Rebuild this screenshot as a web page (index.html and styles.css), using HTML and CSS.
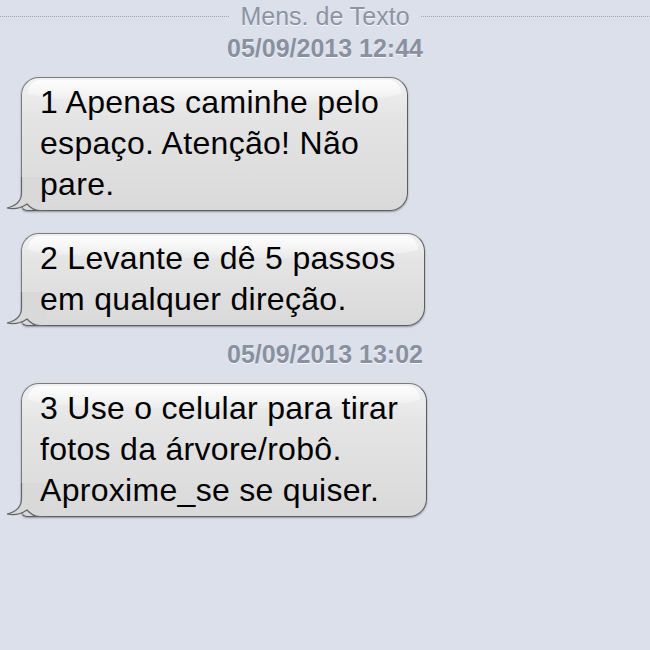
FILE: index.html
```html
<!DOCTYPE html>
<html lang="pt">
<head>
<meta charset="utf-8">
<title>Mens. de Texto</title>
<link rel="stylesheet" href="styles.css">
</head>
<body>
<div class="thread">
  <div class="header">
    <span class="dots"></span>
    <span class="label">Mens. de Texto</span>
    <span class="dots"></span>
  </div>
  <div class="stamp">05/09/2013 12:44</div>
  <div class="bubble">
    <svg class="tail" width="40" height="34" viewBox="0 0 40 34"><path class="tail-fill" d="M15,0 L15,16 C15,24 9,29 1,31 C8,32.5 16,30.5 21,27 C24,30.5 28,33.5 34,33.5 L40,33.5 L40,0 Z"/><path class="tail-line" d="M15.5,0 L15.5,16 C15.5,24 9,29 1,31 C8,32.5 16,30.5 21,27 C24,30.5 28,33.5 34,33.5 L40,33.5"/></svg>
    <span class="txt">1 Apenas caminhe pelo<br>espaço. Atenção! Não<br>pare.</span>
  </div>
  <div class="bubble second">
    <svg class="tail" width="40" height="34" viewBox="0 0 40 34"><path class="tail-fill" d="M15,0 L15,16 C15,24 9,29 1,31 C8,32.5 16,30.5 21,27 C24,30.5 28,33.5 34,33.5 L40,33.5 L40,0 Z"/><path class="tail-line" d="M15.5,0 L15.5,16 C15.5,24 9,29 1,31 C8,32.5 16,30.5 21,27 C24,30.5 28,33.5 34,33.5 L40,33.5"/></svg>
    <span class="txt">2 Levante e dê 5 passos<br>em qualquer direção.</span>
  </div>
  <div class="stamp later">05/09/2013 13:02</div>
  <div class="bubble">
    <svg class="tail" width="40" height="34" viewBox="0 0 40 34"><path class="tail-fill" d="M15,0 L15,16 C15,24 9,29 1,31 C8,32.5 16,30.5 21,27 C24,30.5 28,33.5 34,33.5 L40,33.5 L40,0 Z"/><path class="tail-line" d="M15.5,0 L15.5,16 C15.5,24 9,29 1,31 C8,32.5 16,30.5 21,27 C24,30.5 28,33.5 34,33.5 L40,33.5"/></svg>
    <span class="txt">3 Use o celular para tirar<br>fotos da árvore/robô.<br>Aproxime_se se quiser.</span>
  </div>
</div>
</body>
</html>
```
FILE: styles.css
```css
html, body {
  margin: 0;
  padding: 0;
}
body {
  width: 650px;
  height: 650px;
  overflow: hidden;
  background: #dbe0eb;
  font-family: "Liberation Sans", Helvetica, Arial, sans-serif;
}
.thread {
  display: flex;
  flex-direction: column;
  align-items: flex-start;
  padding-top: 2px;
}
.header {
  display: flex;
  align-items: center;
  align-self: stretch;
  height: 28px;
  font-size: 25px;
  line-height: 28px;
  color: #8c93a3;
  text-shadow: 0 1px 0 rgba(255,255,255,0.8);
}
.dots {
  flex: 1;
  height: 0;
  border-top: 1px dotted #9ea6b5;
}
.label {
  margin: 0 11px;
}
.stamp {
  align-self: stretch;
  text-align: center;
  font-size: 25px;
  font-weight: bold;
  line-height: 28px;
  color: #8990a0;
  text-shadow: 0 1px 0 rgba(255,255,255,0.8);
  margin-top: 4px;
}
.stamp.later {
  margin-top: 14px;
}
.bubble {
  position: relative;
  margin: 15px 0 0 21px;
  padding: 4px 28px 5px 18px;
  border: 1px solid #7c7c7c;
  border-right-color: #5c5c5c;
  border-bottom-color: #5e5e5e;
  border-radius: 18px;
  border-bottom-left-radius: 6px;
  background: linear-gradient(#f1f1f1 0%, #e4e4e4 30%, #dedede 70%, #d9d9d9 100%);
  box-shadow: 0 1px 2px rgba(0,0,0,0.35);
  font-size: 32px;
  line-height: 41px;
  letter-spacing: 0.3px;
  color: #000;
  white-space: nowrap;
}
.bubble.second {
  margin-top: 22px;
}
.bubble::before {
  content: "";
  position: absolute;
  left: 6px;
  right: 6px;
  top: 2px;
  height: 22px;
  border-radius: 14px 14px 40% 40% / 14px 14px 10px 10px;
  background: linear-gradient(rgba(255,255,255,0.85), rgba(255,255,255,0.15));
}
.tail {
  position: absolute;
  left: -16px;
  bottom: -1px;
  overflow: visible;
}
.tail-fill {
  fill: #d9d9d9;
}
.tail-line {
  fill: none;
  stroke: #666;
  stroke-width: 1.2;
}
.txt {
  position: relative;
}
```
